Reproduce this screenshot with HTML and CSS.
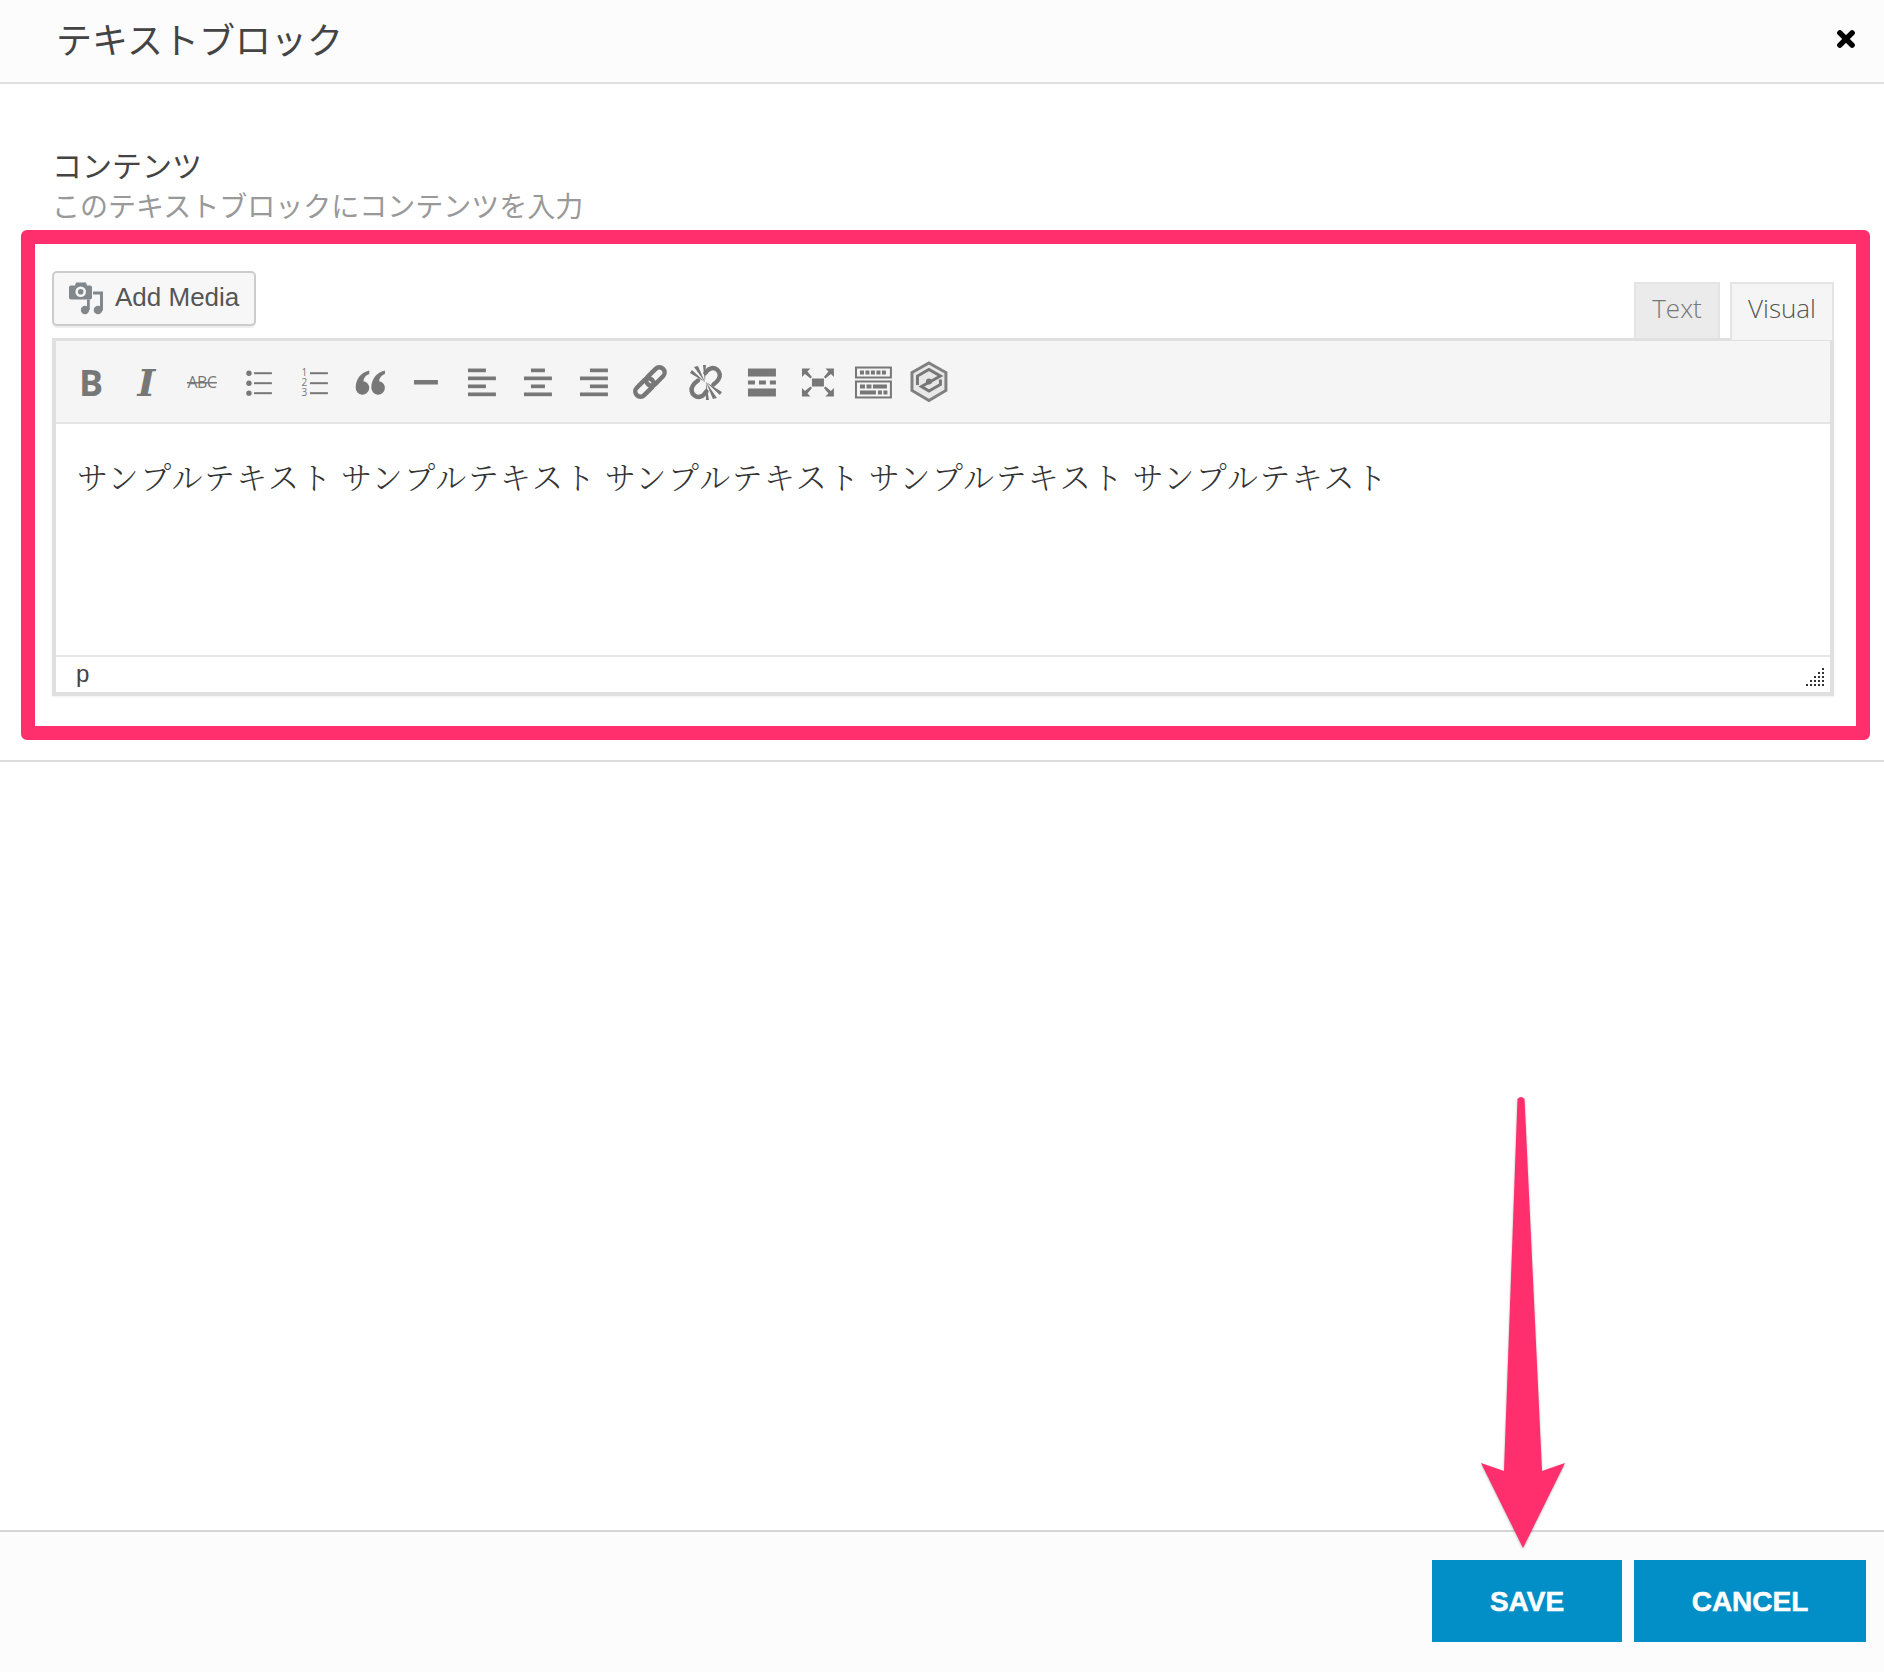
FILE: index.html
```html
<!DOCTYPE html>
<html lang="ja">
<head>
<meta charset="utf-8">
<title>テキストブロック</title>
<link rel="stylesheet" href="styles.css">
</head>
<body>
<div class="modal">
  <header class="modal-head">
    <h1 class="modal-title">テキストブロック</h1>
    <svg class="close" viewBox="0 0 18 18"><path d="M3.500 3.500L14.500 14.500M14.500 3.500L3.500 14.500"/></svg>
  </header>
  <main class="modal-body">
    <section class="field">
      <div class="field-label">コンテンツ</div>
      <div class="field-help">このテキストブロックにコンテンツを入力</div>
      <div class="highlight">
        <div class="editor-top">
          <button class="media-btn">
            <svg class="media-icon" viewBox="0 0 34 36">
              <path d="M2 5.500h4l1-3h10l1 3h3a2 2 0 0 1 2 2v10a2 2 0 0 1-2 2H2a2 2 0 0 1-2-2v-10a2 2 0 0 1 2-2z"/>
              <circle class="hole" cx="11.700" cy="11.800" r="5.300"/>
              <circle cx="11.700" cy="11.800" r="2.800"/>
              <path d="M24 11.500h10v19h-3V14.500h-7z"/>
              <circle cx="29" cy="30" r="4.300"/>
              <circle cx="16" cy="30" r="4.200"/>
              <path d="M18 19.500h2.800V30H18z"/>
            </svg>
            <span>Add Media</span>
          </button>
          <div class="tabs">
            <span class="tab tab-text">Text</span>
            <span class="tab tab-visual">Visual</span>
          </div>
        </div>
        <div class="editor">
          <div class="toolbar">
            <svg class="tool" viewBox="0 0 56 56"><text class="t-b" x="28" y="42.500">B</text></svg>
            <svg class="tool" viewBox="0 0 56 56"><text class="t-i" x="27.500" y="42">I</text></svg>
            <svg class="tool" viewBox="0 0 56 56"><text class="t-abc" x="27" y="34">ABC</text><rect x="12" y="28" width="30" height="1.500"/></svg>
            <svg class="tool" viewBox="0 0 56 56">
              <circle cx="18" cy="19.200" r="2.700"/><circle cx="18" cy="29.200" r="2.700"/><circle cx="18" cy="39.200" r="2.700"/>
              <rect x="23" y="18.200" width="18" height="2"/><rect x="23" y="28.200" width="18" height="2"/><rect x="23" y="38.200" width="18" height="2"/>
            </svg>
            <svg class="tool" viewBox="0 0 56 56">
              <text class="t-n" x="17.500" y="22">1</text><text class="t-n" x="17.500" y="32">2</text><text class="t-n" x="17.500" y="42">3</text>
              <rect x="23" y="18.200" width="18" height="2"/><rect x="23" y="28.200" width="18" height="2"/><rect x="23" y="38.200" width="18" height="2"/>
            </svg>
            <svg class="tool" viewBox="0 0 56 56">
              <path d="M27.300 16.500C19 18.500 13.700 25 13.700 33.800A6.800 6.800 0 1 0 21.500 27.200C21.500 24 23.500 21.500 27.300 20Z"/>
              <path d="M43 16.500C34.700 18.500 29.400 25 29.400 33.800A6.800 6.800 0 1 0 37.200 27.200C37.200 24 39.200 21.500 43 20Z"/>
            </svg>
            <svg class="tool" viewBox="0 0 56 56"><rect x="16" y="26" width="24" height="4.500"/></svg>
            <svg class="tool" viewBox="0 0 56 56">
              <rect x="14" y="14.500" width="18" height="3.700"/><rect x="14" y="22.500" width="28" height="3.700"/><rect x="14" y="30.500" width="18" height="3.700"/><rect x="14" y="38.500" width="28" height="3.700"/>
            </svg>
            <svg class="tool" viewBox="0 0 56 56">
              <rect x="21" y="14.500" width="14" height="3.700"/><rect x="14" y="22.500" width="28" height="3.700"/><rect x="21" y="30.500" width="14" height="3.700"/><rect x="14" y="38.500" width="28" height="3.700"/>
            </svg>
            <svg class="tool" viewBox="0 0 56 56">
              <rect x="24" y="14.500" width="18" height="3.700"/><rect x="14" y="22.500" width="28" height="3.700"/><rect x="24" y="30.500" width="18" height="3.700"/><rect x="14" y="38.500" width="28" height="3.700"/>
            </svg>
            <svg class="tool" viewBox="0 0 56 56">
              <g class="line" transform="rotate(-45 28 28)">
                <rect x="9.400" y="22.750" width="21.600" height="10.500" rx="5.250"/>
                <rect x="25" y="22.750" width="21.600" height="10.500" rx="5.250"/>
              </g>
            </svg>
            <svg class="tool" viewBox="0 0 56 56">
              <g class="line">
                <path d="M27.500 19l1.500-2a6.800 6.800 0 0 1 11.500 8.500c-1 1.800-3 3.500-5 5"/>
                <path d="M28.500 37.500l-2 2.500a6.800 6.800 0 0 1-11.500-8.500c1-1.800 3-3.500 5-5"/>
              </g>
              <path d="M27 28L12 19l2-3zM27 28L16 13l4-1zM27 28L25 11l3 0zM28 28L44 38l-2 3zM28 28L39 44l-4 1zM28 28L31 46l-3 0z"/>
            </svg>
            <svg class="tool" viewBox="0 0 56 56">
              <rect x="14" y="14.500" width="28" height="8"/><rect x="14" y="26.500" width="7" height="4"/><rect x="25" y="26.500" width="7" height="4"/><rect x="36" y="26.500" width="6" height="4"/><rect x="14" y="34.500" width="28" height="8"/>
            </svg>
            <svg class="tool" viewBox="0 0 56 56">
              <rect x="22" y="24.500" width="12" height="8"/>
              <path d="M12 14.500h8.500L17.500 17.500 22 23l-1.500 1.500-5.500-4.500-3 3zM44 14.500h-8.500L38.500 17.500 34 23l1.500 1.500 5.500-4.500 3 3zM12 42.500h8.500L17.500 39.500 22 34l-1.500-1.500-5.500 4.500-3-3zM44 42.500h-8.500L38.500 39.500 34 34l1.500-1.500 5.500 4.500 3-3z"/>
            </svg>
            <svg class="tool" viewBox="0 0 56 56">
              <rect class="frame" x="11" y="13.500" width="35" height="10"/>
              <rect class="frame" x="11" y="27.500" width="35" height="16"/>
              <rect x="15" y="16.500" width="4" height="4"/><rect x="20.500" y="16.500" width="4" height="4"/><rect x="26" y="16.500" width="4" height="4"/><rect x="31.500" y="16.500" width="4" height="4"/><rect x="37" y="16.500" width="4" height="4"/>
              <rect x="15" y="30.500" width="5" height="4"/><rect x="21.500" y="30.500" width="5" height="4"/><rect x="28" y="30.500" width="14" height="4"/>
              <rect x="15" y="36.500" width="16" height="4"/><rect x="33" y="36.500" width="4" height="4"/><rect x="38.500" y="36.500" width="4" height="4"/>
            </svg>
            <svg class="tool layer" viewBox="0 0 56 56">
              <path class="hex" d="M28 9L45 18.500V36.500L28 46.500L11 36.500V18.500Z"/>
              <path class="swirl" d="M16.500 31V22L28 15.500 39.500 22 20.500 32.500 28 37 39.500 30.500V25.500"/>
              <circle cx="28" cy="27.500" r="3"/>
            </svg>
          </div>
          <div class="content">サンプルテキスト サンプルテキスト サンプルテキスト サンプルテキスト サンプルテキスト</div>
          <div class="status">
            <span>p</span>
            <svg class="grip" viewBox="0 0 20 20">
              <rect x="17" y="1" width="2" height="2"/>
              <rect x="13" y="5" width="2" height="2"/><rect x="17" y="5" width="2" height="2"/>
              <rect x="9" y="9" width="2" height="2"/><rect x="13" y="9" width="2" height="2"/><rect x="17" y="9" width="2" height="2"/>
              <rect x="5" y="13" width="2" height="2"/><rect x="9" y="13" width="2" height="2"/><rect x="13" y="13" width="2" height="2"/><rect x="17" y="13" width="2" height="2"/>
              <rect x="1" y="17" width="2" height="2"/><rect x="5" y="17" width="2" height="2"/><rect x="9" y="17" width="2" height="2"/><rect x="13" y="17" width="2" height="2"/><rect x="17" y="17" width="2" height="2"/>
            </svg>
          </div>
        </div>
      </div>
    </section>
  </main>
  <footer class="modal-foot">
    <button class="action action-save">SAVE</button>
    <button class="action action-cancel">CANCEL</button>
  </footer>
  <svg class="arrow" viewBox="0 0 86 453">
    <path d="M37.500 3Q41 -1 44.500 3L62 375 85 367 43 452 1 367 24 375Z"/>
  </svg>
</div>
</body>
</html>
```

FILE: styles.css
```css
* { box-sizing: border-box; }
html, body { margin: 0; padding: 0; background: #fff; }
body { font-family: "Liberation Sans", "Noto Sans CJK JP", sans-serif; }

.modal { position: relative; display: flex; flex-direction: column; width: 1884px; height: 1672px; overflow: hidden; }

.modal-head { display: flex; align-items: center; justify-content: space-between; height: 84px; padding: 0 28px 5px 56px; background: #fcfcfc; border-bottom: 2px solid #e0e0e0; }
.modal-title { margin: 0; font: 400 36px/1.2 "Noto Sans CJK JP", sans-serif; color: #444; }
.close { width: 20px; height: 20px; fill: none; stroke: #000; stroke-width: 5; stroke-linecap: round; }

.modal-body { flex: 1; }
.field { padding: 60px 14px 20px 21px; height: 678px; border-bottom: 2px solid #ddd; }
.field-label { padding-left: 31px; font: 400 30px/40px "Noto Sans CJK JP", sans-serif; color: #444; }
.field-help { padding-left: 31px; margin-bottom: 4px; font: 400 28px/42px "Noto Sans CJK JP", sans-serif; color: #999; }

.highlight { height: 510px; border: 14px solid #ff2f6e; border-radius: 6px; padding: 27px 22px 0 17px; }
.editor-top { display: flex; justify-content: space-between; align-items: flex-start; height: 67px; }

.media-btn { display: flex; align-items: center; gap: 12px; width: 204px; height: 55px; padding: 0 0 2px 15px; border: 2px solid #ccc; border-radius: 5px; background: #f7f7f7; box-shadow: 0 2px 0 #eee; font: 400 26px "Liberation Sans", sans-serif; color: #555; }
.media-icon { width: 34px; height: 36px; fill: #82878c; }
.media-icon .hole { fill: #f7f7f7; }

.tabs { display: flex; gap: 10px; align-items: flex-end; margin-top: 11px; }
.tab { display: block; text-align: center; font: 300 26px/48px "Open Sans", sans-serif; border: 2px solid #e4e4e4; }
.tab-text { width: 86px; height: 56px; background: #ebebeb; color: #777; border-bottom: 0; }
.tab-visual { position: relative; z-index: 1; width: 104px; height: 58px; margin-bottom: -2px; background: #f5f5f5; color: #555; border-bottom: 0; }

.editor { display: flex; flex-direction: column; height: 358px; border: solid #e0e0e0; border-width: 3px 4px 4px; box-shadow: 0 1px 2px rgba(0,0,0,.06); }
.toolbar { display: flex; align-items: center; height: 83px; padding: 0 0 0 7px; background: #f5f5f5; border-bottom: 2px solid #e5e5e5; }
.tool { flex: 0 0 55.900px; width: 55.900px; height: 56px; fill: #777; overflow: visible; }
.tool .line { fill: none; stroke: #777; stroke-width: 4.500; stroke-linecap: round; }
.tool .frame { fill: none; stroke: #777; stroke-width: 2; }
.tool text { text-anchor: middle; fill: #777; }
.t-b { font: 700 36px "Open Sans", sans-serif; }
.t-i { font: italic 700 38px "DejaVu Serif", serif; }
.t-abc { font: 400 16px "Open Sans", sans-serif; letter-spacing: -.5px; }
.t-n { font: 400 10px "Open Sans", sans-serif; }
.layer { filter: blur(.5px); }
.layer .hex { fill: #e8e8e8; stroke: #808080; stroke-width: 3; }
.layer .swirl { fill: none; stroke: #777; stroke-width: 3; }

.content { flex: 1; padding: 28px 0 0 21px; font: 300 31px/48px "Noto Serif CJK JP", "Noto Sans CJK JP", serif; color: #333; letter-spacing: 1.400px; word-spacing: -1.300px; white-space: nowrap; }

.status { display: flex; align-items: center; justify-content: space-between; height: 37px; padding: 0 5px 2px 20px; border-top: 2px solid #e5e5e5; font: 400 24px "Liberation Sans", sans-serif; color: #444; }
.grip { width: 20px; height: 20px; margin-top: 6px; fill: #333; }

.modal-foot { display: flex; justify-content: flex-end; gap: 12px; height: 142px; padding: 28px 18px 0 0; background: #fcfcfc; border-top: 2px solid #d5d5d5; }
.action { height: 82px; padding: 2px 0 0; border: 0; background: #028fc7; color: #fff; font: 700 28px "Liberation Sans", sans-serif; -webkit-text-stroke: .5px #fff; }
.action-save { width: 190px; }
.action-cancel { width: 232px; }

.arrow { position: absolute; left: 1480px; top: 1096px; width: 86px; height: 453px; fill: #ff2f6e; filter: drop-shadow(0 1px 1px rgba(0,0,0,.3)); }
```
